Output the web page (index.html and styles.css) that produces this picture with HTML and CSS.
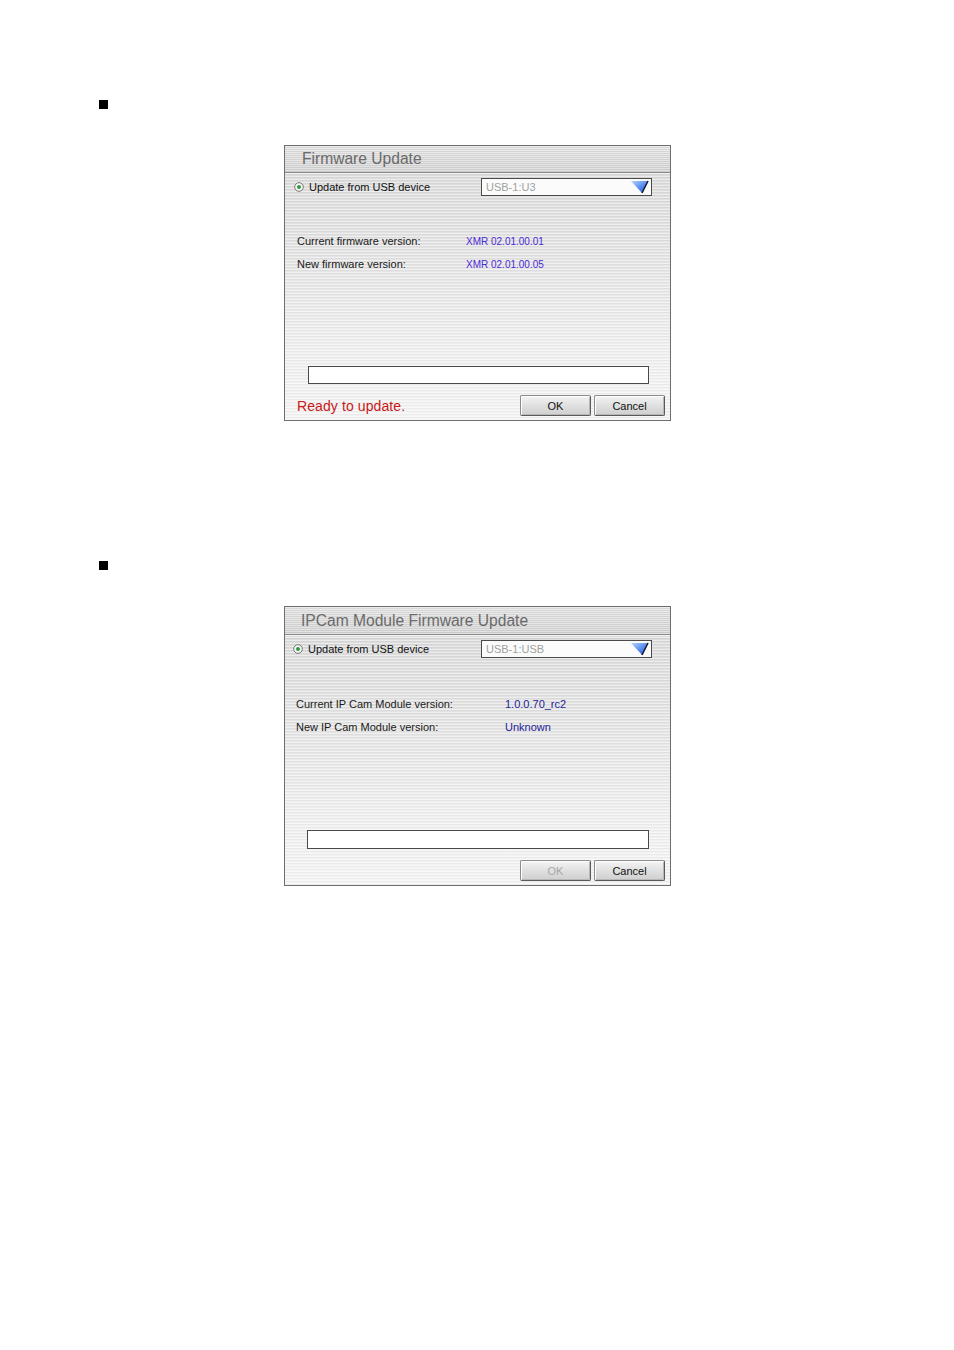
FILE: index.html
```html
<!DOCTYPE html>
<html>
<head>
<meta charset="utf-8">
<title>Firmware Update</title>
<link rel="stylesheet" href="styles.css">
</head>
<body>
<div class="page">
  <section class="block">
    <div class="bullet"></div>
    <div class="dialog">
      <div class="titlebar">Firmware Update</div>
      <div class="body">
        <div class="source-row">
          <label class="radio">
            <svg width="10" height="10" viewBox="0 0 10 10"><circle cx="5" cy="5" r="4.3" fill="#fafafa" stroke="#6a6a6a" stroke-width="0.9"/><circle cx="5" cy="5" r="2" fill="#2f9a3a"/></svg>
            <span>Update from USB device</span>
          </label>
          <div class="select">
            <span>USB-1:U3</span>
            <svg class="arrow" width="20" height="14" viewBox="0 0 20 14"><defs><linearGradient id="g1" x1="0" y1="0" x2="1" y2="1"><stop offset="0" stop-color="#b8d4ff"/><stop offset="0.6" stop-color="#4d86f0"/><stop offset="1" stop-color="#1c4cc8"/></linearGradient></defs><polygon points="1,1 18,1 12,13" fill="url(#g1)"/><polyline points="18,1 12,13" fill="none" stroke="#1a1a2a" stroke-width="1.6"/></svg>
          </div>
        </div>
        <div class="info">
          <div class="info-row"><span class="label">Current firmware version:</span><span class="value v1">XMR 02.01.00.01</span></div>
          <div class="info-row"><span class="label">New firmware version:</span><span class="value v1">XMR 02.01.00.05</span></div>
        </div>
        <div class="progress"></div>
        <div class="footer">
          <span class="status">Ready to update.</span>
          <div class="buttons">
            <button class="btn">OK</button>
            <button class="btn">Cancel</button>
          </div>
        </div>
      </div>
    </div>
  </section>

  <section class="block second">
    <div class="bullet"></div>
    <div class="dialog tall">
      <div class="titlebar">IPCam Module Firmware Update</div>
      <div class="body">
        <div class="source-row">
          <label class="radio">
            <svg width="10" height="10" viewBox="0 0 10 10"><circle cx="5" cy="5" r="4.3" fill="#fafafa" stroke="#6a6a6a" stroke-width="0.9"/><circle cx="5" cy="5" r="2" fill="#2f9a3a"/></svg>
            <span>Update from USB device</span>
          </label>
          <div class="select">
            <span>USB-1:USB</span>
            <svg class="arrow" width="20" height="14" viewBox="0 0 20 14"><defs><linearGradient id="g2" x1="0" y1="0" x2="1" y2="1"><stop offset="0" stop-color="#b8d4ff"/><stop offset="0.6" stop-color="#4d86f0"/><stop offset="1" stop-color="#1c4cc8"/></linearGradient></defs><polygon points="1,1 18,1 12,13" fill="url(#g2)"/><polyline points="18,1 12,13" fill="none" stroke="#1a1a2a" stroke-width="1.6"/></svg>
          </div>
        </div>
        <div class="info wide">
          <div class="info-row"><span class="label">Current IP Cam Module version:</span><span class="value v2">1.0.0.70_rc2</span></div>
          <div class="info-row"><span class="label">New IP Cam Module version:</span><span class="value v2">Unknown</span></div>
        </div>
        <div class="progress"></div>
        <div class="footer">
          <span class="status"></span>
          <div class="buttons">
            <button class="btn disabled">OK</button>
            <button class="btn">Cancel</button>
          </div>
        </div>
      </div>
    </div>
  </section>
</div>
</body>
</html>
```

FILE: styles.css
```css
html, body {
  margin: 0;
  padding: 0;
  background: #ffffff;
}

body {
  font-family: "Liberation Sans", Arial, sans-serif;
  color: #000;
}

.page {
  width: 954px;
  height: 1350px;
  padding-top: 100px;
  box-sizing: border-box;
}

.block.second {
  margin-top: 140px;
}

.bullet {
  width: 9px;
  height: 9px;
  margin-left: 99px;
  background: #000;
}

.dialog {
  margin-left: 284px;
  margin-top: 36px;
  width: 387px;
  height: 276px;
  box-sizing: border-box;
  border: 1px solid #6e6e6e;
  display: flex;
  flex-direction: column;
  background:
    repeating-linear-gradient(to bottom, rgba(255,255,255,0.45) 0 1px, rgba(0,0,0,0.035) 1px 2px, rgba(255,255,255,0) 2px 3px),
    linear-gradient(to bottom, #d9d9d9 0%, #e4e4e4 40%, #f1f1f1 80%, #f4f4f4 100%);
}

.dialog.tall {
  height: 280px;
}

.titlebar {
  height: 27px;
  flex: none;
  box-sizing: border-box;
  padding-left: 17px;
  font-size: 15.6px;
  line-height: 26px;
  color: #6a6a6a;
  border-bottom: 1px solid #8a8a8a;
  box-shadow: 0 1px 0 #f4f4f4;
  background:
    repeating-linear-gradient(to bottom, rgba(255,255,255,0.35) 0 1px, rgba(0,0,0,0.04) 1px 2px),
    linear-gradient(to bottom, #e2e2e2, #d2d2d2);
}

.dialog.tall .titlebar {
  padding-left: 16px;
  height: 28px;
  line-height: 27px;
}

.body {
  flex: 1;
  display: flex;
  flex-direction: column;
  padding: 5px 18px 4px 9px;
}

.source-row {
  display: flex;
  align-items: center;
  justify-content: space-between;
  height: 18px;
}

.dialog.tall .body {
  padding-left: 8px;
}

.radio {
  display: flex;
  align-items: center;
  gap: 5px;
  font-size: 11px;
  color: #111;
}

.radio svg {
  display: block;
}

.select {
  width: 171px;
  height: 18px;
  box-sizing: border-box;
  border: 1px solid #4a4a4a;
  background: #fbfbfb;
  display: flex;
  align-items: center;
  justify-content: space-between;
  padding: 0 1px 0 4px;
  font-size: 11px;
  color: #a0a0a0;
}

.select .arrow {
  display: block;
}

.info {
  margin-top: 39px;
  padding-left: 3px;
  display: flex;
  flex-direction: column;
  gap: 10px;
}

.info-row {
  display: flex;
  align-items: baseline;
  font-size: 11px;
  line-height: 13px;
  color: #1a1a1a;
}

.info .label {
  width: 169px;
  flex: none;
}

.info.wide {
  margin-top: 40px;
}

.info.wide .label {
  width: 209px;
}

.value.v1 {
  color: #4a2ad8;
  font-size: 10px;
}

.value.v2 {
  color: #23239a;
}

.progress {
  margin-top: auto;
  margin-left: 14px;
  margin-right: 3px;
  height: 18px;
  box-sizing: border-box;
  border: 1px solid #4a4a4a;
  background: #ffffff;
  flex: none;
}

.dialog.tall .progress {
  height: 19px;
  margin-left: 14px;
}

.footer {
  margin-top: 11px;
  height: 21px;
  display: flex;
  align-items: center;
  justify-content: space-between;
  margin-right: -13px;
  flex: none;
}

.status {
  font-size: 14px;
  color: #c81818;
  padding-left: 3px;
  letter-spacing: 0.1px;
}

.buttons {
  display: flex;
  gap: 3px;
}

.btn {
  width: 71px;
  height: 21px;
  box-sizing: border-box;
  border: 1px solid #8c8c8c;
  border-right-color: #5a5a5a;
  border-bottom-color: #5a5a5a;
  border-radius: 2px;
  font-family: "Liberation Sans", Arial, sans-serif;
  font-size: 11px;
  color: #111;
  padding: 0;
  background: linear-gradient(to bottom, #f4f4f4 0%, #e2e2e2 45%, #cfcfcf 100%);
  box-shadow: inset 1px 1px 0 #ffffff, inset -1px -1px 0 #b8b8b8;
}

.btn.disabled {
  color: #a8a8a8;
}
```
